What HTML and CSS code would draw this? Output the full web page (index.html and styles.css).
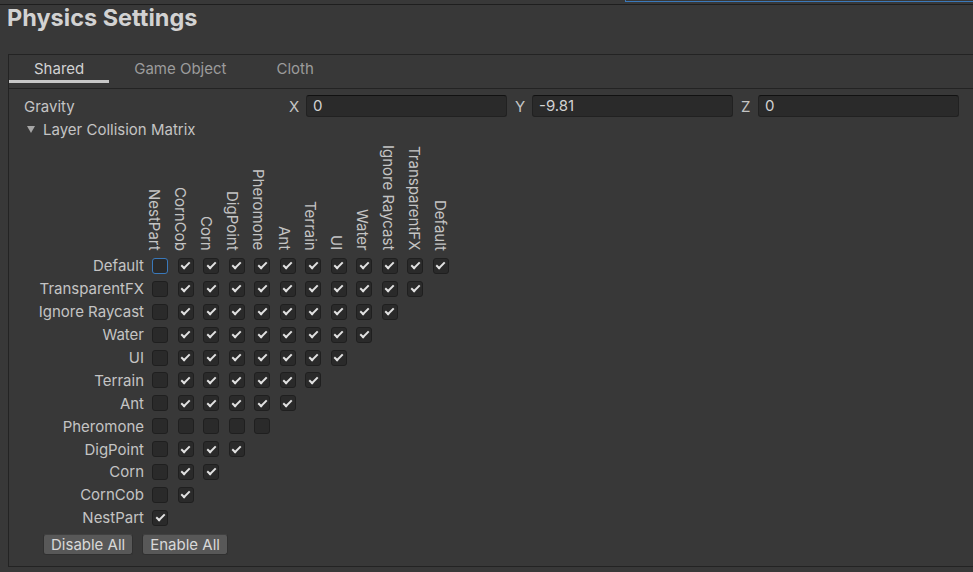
FILE: index.html
```html
<!DOCTYPE html>
<html lang="en">
<head>
<meta charset="utf-8">
<title>Physics Settings</title>
<link rel="stylesheet" href="styles.css">
</head>
<body>
<div class="topstrip"><div class="focus-edge"></div></div>
<h1 class="title">Physics Settings</h1>
<div class="panel">
  <div class="tabs">
    <div class="tab active">Shared</div>
    <div class="tab">Game Object</div>
    <div class="tab">Cloth</div>
  </div>
  <div class="content">
    <div class="gravity">
      <div class="prop-label">Gravity</div>
      <div class="axis"><span class="axis-label">X</span><div class="field">0</div></div>
      <div class="axis"><span class="axis-label">Y</span><div class="field">-9.81</div></div>
      <div class="axis"><span class="axis-label">Z</span><div class="field">0</div></div>
    </div>
    <div class="foldout">
      <svg class="arrow" width="8" height="7" viewBox="0 0 8 7"><path d="M0 0H8L4 7Z" fill="#a6a6a6"/></svg>
      <span>Layer Collision Matrix</span>
    </div>
    <div class="matrix">
      <div class="col-heads">
        <div class="col-head">NestPart</div>
        <div class="col-head">CornCob</div>
        <div class="col-head">Corn</div>
        <div class="col-head">DigPoint</div>
        <div class="col-head">Pheromone</div>
        <div class="col-head">Ant</div>
        <div class="col-head">Terrain</div>
        <div class="col-head">UI</div>
        <div class="col-head">Water</div>
        <div class="col-head">Ignore Raycast</div>
        <div class="col-head">TransparentFX</div>
        <div class="col-head">Default</div>
      </div>
      <div class="mrow"><div class="row-label">Default</div><span class="cb focus"></span><span class="cb on"></span><span class="cb on"></span><span class="cb on"></span><span class="cb on"></span><span class="cb on"></span><span class="cb on"></span><span class="cb on"></span><span class="cb on"></span><span class="cb on"></span><span class="cb on"></span><span class="cb on"></span></div>
      <div class="mrow"><div class="row-label">TransparentFX</div><span class="cb"></span><span class="cb on"></span><span class="cb on"></span><span class="cb on"></span><span class="cb on"></span><span class="cb on"></span><span class="cb on"></span><span class="cb on"></span><span class="cb on"></span><span class="cb on"></span><span class="cb on"></span></div>
      <div class="mrow"><div class="row-label">Ignore Raycast</div><span class="cb"></span><span class="cb on"></span><span class="cb on"></span><span class="cb on"></span><span class="cb on"></span><span class="cb on"></span><span class="cb on"></span><span class="cb on"></span><span class="cb on"></span><span class="cb on"></span></div>
      <div class="mrow"><div class="row-label">Water</div><span class="cb"></span><span class="cb on"></span><span class="cb on"></span><span class="cb on"></span><span class="cb on"></span><span class="cb on"></span><span class="cb on"></span><span class="cb on"></span><span class="cb on"></span></div>
      <div class="mrow"><div class="row-label">UI</div><span class="cb"></span><span class="cb on"></span><span class="cb on"></span><span class="cb on"></span><span class="cb on"></span><span class="cb on"></span><span class="cb on"></span><span class="cb on"></span></div>
      <div class="mrow"><div class="row-label">Terrain</div><span class="cb"></span><span class="cb on"></span><span class="cb on"></span><span class="cb on"></span><span class="cb on"></span><span class="cb on"></span><span class="cb on"></span></div>
      <div class="mrow"><div class="row-label">Ant</div><span class="cb"></span><span class="cb on"></span><span class="cb on"></span><span class="cb on"></span><span class="cb on"></span><span class="cb on"></span></div>
      <div class="mrow"><div class="row-label">Pheromone</div><span class="cb"></span><span class="cb"></span><span class="cb"></span><span class="cb"></span><span class="cb"></span></div>
      <div class="mrow"><div class="row-label">DigPoint</div><span class="cb"></span><span class="cb on"></span><span class="cb on"></span><span class="cb on"></span></div>
      <div class="mrow"><div class="row-label">Corn</div><span class="cb"></span><span class="cb on"></span><span class="cb on"></span></div>
      <div class="mrow"><div class="row-label">CornCob</div><span class="cb"></span><span class="cb on"></span></div>
      <div class="mrow"><div class="row-label">NestPart</div><span class="cb on"></span></div>
    </div>
    <div class="buttons">
      <button class="btn" type="button">Disable All</button>
      <button class="btn" type="button">Enable All</button>
    </div>
  </div>
</div>
</body>
</html>
```
FILE: styles.css
```css
html, body {
  margin: 0;
  background: #383838;
}
body {
  width: 973px;
  height: 572px;
  overflow: hidden;
  font-family: Inter, "Noto Sans", sans-serif;
  font-size: 15px;
  color: #c4c4c4;
}
.topstrip {
  height: 4px;
  border-bottom: 1px solid #1e1e1e;
  display: flex;
}
.focus-edge {
  margin-left: 625px;
  flex: 1;
  height: 2px;
  border-left: 1px solid #3a79bb;
  border-bottom: 1px solid #3a79bb;
  box-sizing: border-box;
}
.title {
  margin: 0;
  height: 49px;
  box-sizing: border-box;
  padding: 0 0 0 7px;
  font-size: 23.5px;
  line-height: 26px;
  font-weight: 700;
  color: #d2d2d2;
}
.panel {
  margin-left: 8px;
  height: 513px;
  box-sizing: border-box;
  border: 1px solid #232323;
  border-right: none;
}
.tabs {
  display: flex;
  align-items: flex-start;
  height: 33px;
  border-bottom: 1px solid #232323;
}
.tab {
  padding: 2px 25px 0;
  line-height: 23px;
  border-bottom: 3px solid transparent;
  color: #9c9c9c;
}
.tab.active {
  color: #d2d2d2;
  border-bottom-color: #c8c8c8;
}
.content {
  padding: 6px 0 0 15px;
}
.gravity {
  display: flex;
  align-items: center;
  height: 22px;
}
.prop-label {
  width: 265px;
}
.axis {
  display: flex;
  align-items: center;
  margin-right: 8px;
}
.axis-label {
  width: 17px;
}
.field {
  width: 201px;
  height: 22px;
  box-sizing: border-box;
  background: #2a2a2a;
  border: 1px solid #212121;
  border-top-color: #111111;
  border-radius: 3px;
  padding-left: 6px;
  line-height: 20px;
  color: #d2d2d2;
}
.foldout {
  display: flex;
  align-items: center;
  height: 20px;
  margin-top: 2px;
}
.arrow {
  margin: 0 8px 0 3px;
}
.col-heads {
  display: flex;
  height: 115.5px;
  box-sizing: border-box;
  padding: 0 0 4px 117px;
}
.col-head {
  writing-mode: vertical-rl;
  width: 26px;
  line-height: 26px;
  text-align: end;
  white-space: nowrap;
}
.mrow {
  display: flex;
  align-items: center;
  height: 22.9px;
}
.row-label {
  width: 128px;
  padding-right: 8px;
  box-sizing: border-box;
  text-align: right;
  white-space: nowrap;
}
.cb {
  position: relative;
  flex: none;
  width: 16px;
  height: 16px;
  box-sizing: border-box;
  margin-right: 9.5px;
  background: #2a2a2a;
  border: 1px solid #1f1f1f;
  border-radius: 3px;
}
.cb.focus {
  border-color: #3a79bb;
}
.cb.on::after {
  content: "";
  position: absolute;
  left: 4.5px;
  top: 1.5px;
  width: 3px;
  height: 7px;
  border: solid #e2e2e2;
  border-width: 0 2px 2px 0;
  transform: rotate(45deg);
}
.buttons {
  display: flex;
  gap: 9px;
  margin: 4.6px 0 0 19px;
}
.btn {
  height: 21px;
  padding: 0 7px;
  background: #585858;
  border: 1px solid #303030;
  border-top-color: #404040;
  border-radius: 3px;
  color: #d8d8d8;
  font-family: Inter, "Noto Sans", sans-serif;
  font-size: 15px;
  line-height: 19px;
}
```
